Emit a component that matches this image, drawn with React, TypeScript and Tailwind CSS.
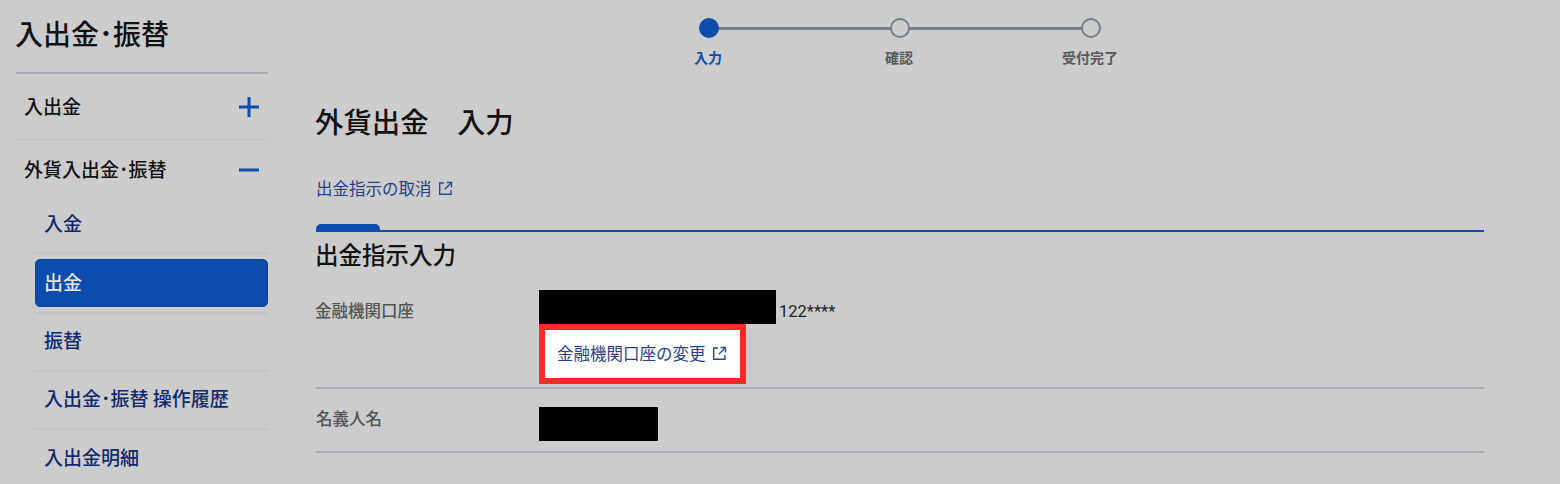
import React from "react";

const fontStack = "font-['Noto_Sans_CJK_JP','Liberation_Sans',sans-serif]";

const ExternalIcon = () => (
  <svg width="15" height="15" viewBox="0 0 15 15" fill="none" stroke="currentColor" strokeWidth="1.4" className="inline-block text-[#2d4a8f]">
    <path d="M6 2H1.7v11.3H13V9" />
    <path d="M8.5 1.5h5v5" />
    <path d="M13.3 1.7 6.8 8.2" />
  </svg>
);

const Sidebar = () => (
  <aside className="w-[252px] shrink-0 ml-4">
    <h1 className="text-[28px] leading-[40px] font-medium text-[#111] mt-[13px] -ml-px">入出金･振替</h1>
    <div className="mt-[19px] border-t-2 border-[#a9adb9]" />
    <div className="flex items-center justify-between h-[66px] pl-[8px] pr-[9px] border-b border-[#bfc1c7]">
      <span className="text-[19px] font-medium text-[#111]">入出金</span>
      <svg width="20" height="20" viewBox="0 0 20 20" stroke="#0d4dab" strokeWidth="3"><path d="M10 0v20M0 10h20" /></svg>
    </div>
    <div className="flex items-center justify-between h-[59px] pl-[8px] pr-[9px]">
      <span className="text-[19px] font-medium text-[#111]">外貨入出金･振替</span>
      <svg width="20" height="20" viewBox="0 0 20 20" stroke="#0d4dab" strokeWidth="3"><path d="M0 10h20" /></svg>
    </div>
    <ul className="ml-[19px] text-[19px] font-medium text-[#12296f]">
      <li className="h-[55px] flex items-center pl-[9px] pb-[4px] border-b-2 border-[#c3c5c9]">入金</li>
      <li className="py-[5px] border-b-2 border-[#c3c5c9]">
        <div className="h-[48px] flex items-center pl-[8px] pb-[2px] rounded-[5px] border border-[#0a4399] bg-[#0c4dab] text-[#e6e6e6]">出金</div>
      </li>
      <li className="h-[58px] flex items-center pl-[9px] pb-[4px] border-b-2 border-[#c3c5c9]">振替</li>
      <li className="h-[58px] flex items-center pl-[9px] pb-[4px] border-b-2 border-[#c3c5c9]">入出金･振替 操作履歴</li>
      <li className="h-[58px] flex items-center pl-[9px] pb-[4px]">入出金明細</li>
    </ul>
  </aside>
);

const steps = [
  { label: "入力", active: true },
  { label: "確認", active: false },
  { label: "受付完了", active: false },
];

const Stepper = () => (
  <div className="flex justify-center pt-[18px] w-full">
    {steps.map((s, i) => (
      <div key={s.label} className="w-[191px] flex flex-col items-center relative">
        {i < steps.length - 1 && <div className="absolute top-[8.5px] left-1/2 w-[191px] h-[3px] bg-[#767e8e]" />}
        <div
          className={
            s.active
              ? "relative w-5 h-5 rounded-full bg-[#0c4dab]"
              : "relative w-5 h-5 rounded-full bg-[#cccccc] border-2 border-[#767e8e]"
          }
        />
        <span className={s.active ? "mt-[9px] -ml-[2px] text-[14px] leading-[21px] font-bold text-[#0c4dab]" : "mt-[9px] -ml-[2px] text-[14px] leading-[21px] font-bold text-[#595959]"}>
          {s.label}
        </span>
      </div>
    ))}
  </div>
);

export default function App() {
  return (
    <div className={`${fontStack} w-[1560px] h-[484px] overflow-hidden bg-[#cccccc] flex`}>
      <Sidebar />
      <main className="ml-[48px] w-[1168px]">
        <Stepper />
        <h2 className="mt-[33px] -ml-px text-[28.4px] leading-[40px] font-medium text-[#111]">外貨出金　入力</h2>
        <a className="mt-[35px] flex items-center gap-[6px] text-[16.5px] leading-[24px] text-[#2a3f86]">
          出金指示の取消 <ExternalIcon />
        </a>
        <div className="mt-[24px] w-16 h-[6px] rounded-t-[5px] bg-[#0c4dab]" />
        <div className="border-t-2 border-[#0c4dab]" />
        <h3 className="mt-[5px] -ml-px text-[23.5px] leading-[34px] font-medium text-[#111]">出金指示入力</h3>
        <div className="mt-[19px] flex border-b-2 border-[#a9adb9] pb-[3px]">
          <div className="w-[223px] text-[16.5px] font-medium text-[#555] leading-[24px] pt-[8px] -ml-px">金融機関口座</div>
          <div className="ml-px">
            <div className="flex items-end">
              <div className="w-[237px] h-[34px] bg-black" />
              <span className="ml-[3px] text-[16.5px] leading-[24px] font-['Roboto',sans-serif] text-[#222]">122****</span>
            </div>
            <div className="w-[207px] h-[60px] border-[6px] border-[#fe2a2a] bg-white flex items-center gap-[6px] pl-[12px] pb-[2px] text-[16.5px] text-[#2a3f86]">
              金融機関口座の変更 <ExternalIcon />
            </div>
          </div>
        </div>
        <div className="flex border-b-2 border-[#a9adb9] pt-[18px] pb-[10px]">
          <div className="w-[223px] text-[16.5px] leading-[22px] font-medium text-[#555]">名義人名</div>
          <div className="w-[119px] h-[34px] bg-black" />
        </div>
      </main>
    </div>
  );
}
